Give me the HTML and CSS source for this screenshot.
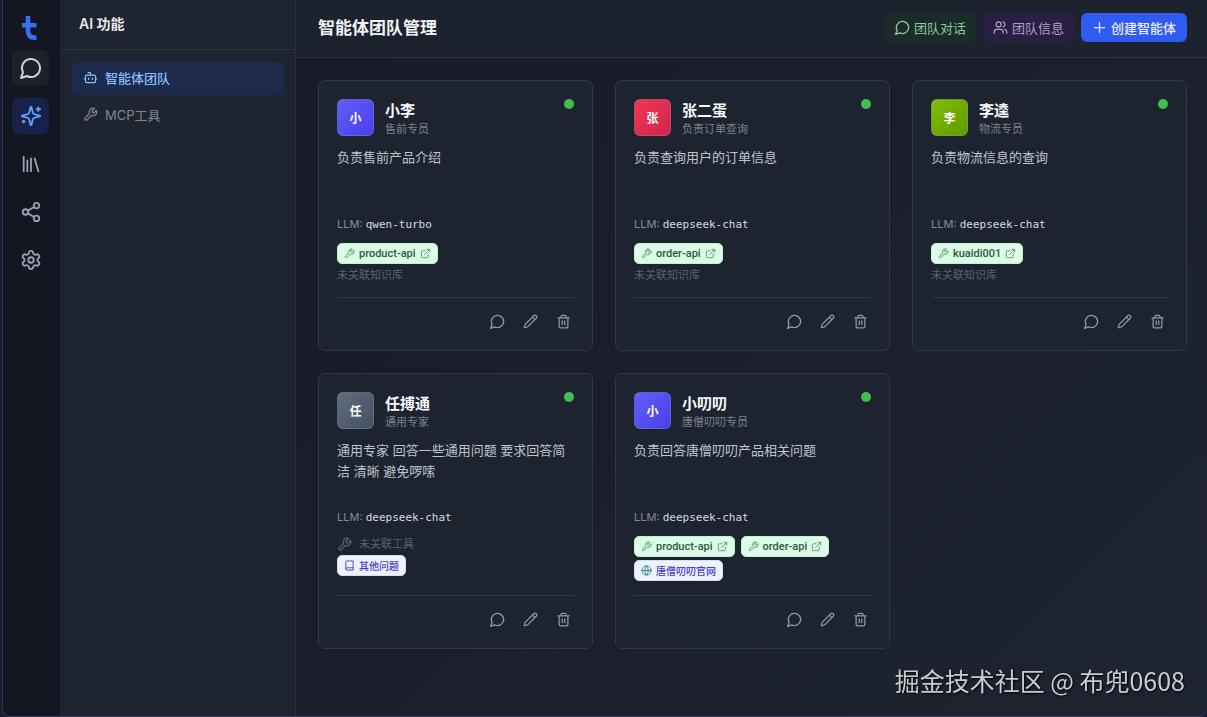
FILE: index.html
```html
<!DOCTYPE html>
<html lang="zh-CN">
<head>
    <meta charset="UTF-8">
    <meta name="viewport" content="width=device-width, initial-scale=1.0">
    <title>智能体团队管理</title>
    <link rel="stylesheet" href="styles.css">
</head>
<body>
    <!-- Shared icons -->
    <svg class="sprite" aria-hidden="true">
        <symbol id="chat" viewBox="1 1 22 22"><path d="M7.9 20A9 9 0 1 0 4 16.1L2 22Z"/></symbol>
        <symbol id="sparkles" viewBox="0 0 24 24"><path d="M9.94 15.5A2 2 0 0 0 8.5 14.06l-6.14-1.58a.5.5 0 0 1 0-.96L8.5 9.94A2 2 0 0 0 9.94 8.5l1.58-6.14a.5.5 0 0 1 .96 0l1.58 6.14a2 2 0 0 0 1.44 1.44l6.14 1.58a.5.5 0 0 1 0 .96l-6.14 1.58a2 2 0 0 0-1.44 1.44l-1.58 6.14a.5.5 0 0 1-.96 0z"/><path d="M20 2.5v4M22 4.5h-4M4 17v2M5 18H3"/></symbol>
        <symbol id="library" viewBox="0 0 24 24"><path d="m16 6 4 14M12 6v14M8 8v12M4 4v16"/></symbol>
        <symbol id="share" viewBox="0 0 24 24"><circle cx="18" cy="5" r="3"/><circle cx="6" cy="12" r="3"/><circle cx="18" cy="19" r="3"/><path d="m8.59 13.51 6.83 3.98M15.41 6.51l-6.82 3.98"/></symbol>
        <symbol id="gear" viewBox="0 0 24 24"><path d="M9.67 4.14a2.34 2.34 0 0 1 4.66 0 2.34 2.34 0 0 0 3.32 1.91 2.34 2.34 0 0 1 2.33 4.04 2.34 2.34 0 0 0 0 3.82 2.34 2.34 0 0 1-2.33 4.04 2.34 2.34 0 0 0-3.32 1.91 2.34 2.34 0 0 1-4.66 0 2.34 2.34 0 0 0-3.32-1.91 2.34 2.34 0 0 1-2.33-4.04 2.34 2.34 0 0 0 0-3.82 2.34 2.34 0 0 1 2.33-4.04 2.34 2.34 0 0 0 3.32-1.91"/><circle cx="12" cy="12" r="3"/></symbol>
        <symbol id="bot" viewBox="0 0 24 24"><path d="M12 8V4H8"/><rect width="16" height="12" x="4" y="8" rx="2"/><path d="M2 14h2M20 14h2M15 13v2M9 13v2"/></symbol>
        <symbol id="wrench" viewBox="0 0 24 24"><path d="M14.7 6.3a1 1 0 0 0 0 1.4l1.6 1.6a1 1 0 0 0 1.4 0l3.77-3.77a6 6 0 0 1-7.94 7.94l-6.91 6.91a2.12 2.12 0 0 1-3-3l6.91-6.91a6 6 0 0 1 7.94-7.94l-3.76 3.76z"/></symbol>
        <symbol id="users" viewBox="0 0 24 24"><path d="M16 21v-2a4 4 0 0 0-4-4H6a4 4 0 0 0-4 4v2M22 21v-2a4 4 0 0 0-3-3.87M16 3.13a4 4 0 0 1 0 7.75"/><circle cx="9" cy="7" r="4"/></symbol>
        <symbol id="plus" viewBox="0 0 24 24"><path d="M4 12h16M12 4v16"/></symbol>
        <symbol id="external" viewBox="0 0 24 24"><path d="M15 3h6v6M10 14 21 3M18 13v6a2 2 0 0 1-2 2H5a2 2 0 0 1-2-2V8a2 2 0 0 1 2-2h6"/></symbol>
        <symbol id="pencil" viewBox="0 0 24 24"><path d="M21.17 6.81a1 1 0 0 0-3.98-3.98L3.84 16.17a2 2 0 0 0-.5.83l-1.32 4.35a.5.5 0 0 0 .62.62l4.35-1.32a2 2 0 0 0 .83-.5zM15 5l4 4"/></symbol>
        <symbol id="trash" viewBox="0 0 24 24"><path d="M3 6h18M19 6v14a2 2 0 0 1-2 2H7a2 2 0 0 1-2-2V6M8 6V4a2 2 0 0 1 2-2h4a2 2 0 0 1 2 2v2M10 11v6M14 11v6"/></symbol>
        <symbol id="book" viewBox="0 0 24 24"><path d="M4 19.5v-15A2.5 2.5 0 0 1 6.5 2H20v20H6.5a2.5 2.5 0 0 1 0-5H20"/></symbol>
        <symbol id="globe" viewBox="0 0 24 24"><circle cx="12" cy="12" r="10"/><path d="M12 2a14.5 14.5 0 0 0 0 20 14.5 14.5 0 0 0 0-20M2 12h20"/></symbol>
    </svg>

    <div class="app">
        <nav class="rail" aria-label="主导航">
            <svg class="logo" viewBox="0 0 15 24" aria-hidden="true">
                <path d="M6 0v14.5q0 7.2 7 7.2h1.5M0 9.2h14.5"/>
            </svg>
            <a href="#" class="rail-link hovered" aria-label="对话"><svg class="icon"><use href="#chat"/></svg></a>
            <a href="#" class="rail-link active" aria-label="AI 功能"><svg class="icon"><use href="#sparkles"/></svg></a>
            <a href="#" class="rail-link" aria-label="知识库"><svg class="icon"><use href="#library"/></svg></a>
            <a href="#" class="rail-link" aria-label="分享"><svg class="icon"><use href="#share"/></svg></a>
            <a href="#" class="rail-link" aria-label="设置"><svg class="icon"><use href="#gear"/></svg></a>
        </nav>

        <aside class="sidebar">
            <h2 class="sidebar-title">AI 功能</h2>
            <nav class="menu">
                <a href="#" class="menu-item active"><svg class="icon"><use href="#bot"/></svg>智能体团队</a>
                <a href="#" class="menu-item"><svg class="icon"><use href="#wrench"/></svg>MCP工具</a>
            </nav>
        </aside>

        <main class="main">
            <header class="header">
                <h1 class="page-title">智能体团队管理</h1>
                <div class="header-actions">
                    <button class="btn btn-green"><svg class="icon"><use href="#chat"/></svg>团队对话</button>
                    <button class="btn btn-purple"><svg class="icon"><use href="#users"/></svg>团队信息</button>
                    <button class="btn btn-primary"><svg class="icon"><use href="#plus"/></svg>创建智能体</button>
                </div>
            </header>

            <div class="agents">
                <article class="card">
                    <div class="card-head">
                        <div class="avatar indigo">小</div>
                        <div class="who">
                            <h3 class="name">小李</h3>
                            <p class="role">售前专员</p>
                        </div>
                        <span class="status"></span>
                    </div>
                    <p class="desc">负责售前产品介绍</p>
                    <p class="llm">LLM: <code>qwen-turbo</code></p>
                    <div class="links">
                        <div class="tags">
                            <a href="#" class="tag tool"><svg class="icon"><use href="#wrench"/></svg>product-api<svg class="icon ext"><use href="#external"/></svg></a>
                        </div>
                        <p class="none">未关联知识库</p>
                    </div>
                    <div class="card-actions">
                        <button class="icon-btn" aria-label="对话"><svg class="icon"><use href="#chat"/></svg></button>
                        <button class="icon-btn" aria-label="编辑"><svg class="icon"><use href="#pencil"/></svg></button>
                        <button class="icon-btn" aria-label="删除"><svg class="icon"><use href="#trash"/></svg></button>
                    </div>
                </article>

                <article class="card">
                    <div class="card-head">
                        <div class="avatar rose">张</div>
                        <div class="who">
                            <h3 class="name">张二蛋</h3>
                            <p class="role">负责订单查询</p>
                        </div>
                        <span class="status"></span>
                    </div>
                    <p class="desc">负责查询用户的订单信息</p>
                    <p class="llm">LLM: <code>deepseek-chat</code></p>
                    <div class="links">
                        <div class="tags">
                            <a href="#" class="tag tool"><svg class="icon"><use href="#wrench"/></svg>order-api<svg class="icon ext"><use href="#external"/></svg></a>
                        </div>
                        <p class="none">未关联知识库</p>
                    </div>
                    <div class="card-actions">
                        <button class="icon-btn" aria-label="对话"><svg class="icon"><use href="#chat"/></svg></button>
                        <button class="icon-btn" aria-label="编辑"><svg class="icon"><use href="#pencil"/></svg></button>
                        <button class="icon-btn" aria-label="删除"><svg class="icon"><use href="#trash"/></svg></button>
                    </div>
                </article>

                <article class="card">
                    <div class="card-head">
                        <div class="avatar lime">李</div>
                        <div class="who">
                            <h3 class="name">李逵</h3>
                            <p class="role">物流专员</p>
                        </div>
                        <span class="status"></span>
                    </div>
                    <p class="desc">负责物流信息的查询</p>
                    <p class="llm">LLM: <code>deepseek-chat</code></p>
                    <div class="links">
                        <div class="tags">
                            <a href="#" class="tag tool"><svg class="icon"><use href="#wrench"/></svg>kuaidi001<svg class="icon ext"><use href="#external"/></svg></a>
                        </div>
                        <p class="none">未关联知识库</p>
                    </div>
                    <div class="card-actions">
                        <button class="icon-btn" aria-label="对话"><svg class="icon"><use href="#chat"/></svg></button>
                        <button class="icon-btn" aria-label="编辑"><svg class="icon"><use href="#pencil"/></svg></button>
                        <button class="icon-btn" aria-label="删除"><svg class="icon"><use href="#trash"/></svg></button>
                    </div>
                </article>

                <article class="card">
                    <div class="card-head">
                        <div class="avatar slate">任</div>
                        <div class="who">
                            <h3 class="name">任搏通</h3>
                            <p class="role">通用专家</p>
                        </div>
                        <span class="status"></span>
                    </div>
                    <p class="desc">通用专家 回答一些通用问题 要求回答简洁 清晰 避免啰嗦</p>
                    <p class="llm">LLM: <code>deepseek-chat</code></p>
                    <div class="links">
                        <p class="none"><svg class="icon"><use href="#wrench"/></svg>未关联工具</p>
                        <div class="tags">
                            <a href="#" class="tag kb"><svg class="icon"><use href="#book"/></svg>其他问题</a>
                        </div>
                    </div>
                    <div class="card-actions">
                        <button class="icon-btn" aria-label="对话"><svg class="icon"><use href="#chat"/></svg></button>
                        <button class="icon-btn" aria-label="编辑"><svg class="icon"><use href="#pencil"/></svg></button>
                        <button class="icon-btn" aria-label="删除"><svg class="icon"><use href="#trash"/></svg></button>
                    </div>
                </article>

                <article class="card">
                    <div class="card-head">
                        <div class="avatar indigo">小</div>
                        <div class="who">
                            <h3 class="name">小叨叨</h3>
                            <p class="role">唐僧叨叨专员</p>
                        </div>
                        <span class="status"></span>
                    </div>
                    <p class="desc">负责回答唐僧叨叨产品相关问题</p>
                    <p class="llm">LLM: <code>deepseek-chat</code></p>
                    <div class="links">
                        <div class="tags">
                            <a href="#" class="tag tool"><svg class="icon"><use href="#wrench"/></svg>product-api<svg class="icon ext"><use href="#external"/></svg></a>
                            <a href="#" class="tag tool"><svg class="icon"><use href="#wrench"/></svg>order-api<svg class="icon ext"><use href="#external"/></svg></a>
                        </div>
                        <div class="tags">
                            <a href="#" class="tag kb"><svg class="icon web"><use href="#globe"/></svg>唐僧叨叨官网</a>
                        </div>
                    </div>
                    <div class="card-actions">
                        <button class="icon-btn" aria-label="对话"><svg class="icon"><use href="#chat"/></svg></button>
                        <button class="icon-btn" aria-label="编辑"><svg class="icon"><use href="#pencil"/></svg></button>
                        <button class="icon-btn" aria-label="删除"><svg class="icon"><use href="#trash"/></svg></button>
                    </div>
                </article>
            </div>
        </main>
    </div>

    <div class="watermark">掘金技术社区 @ 布兜0608</div>
</body>
</html>
```
FILE: styles.css
```css
* {
    box-sizing: border-box;
    margin: 0;
    padding: 0;
}

body {
    min-height: 100vh;
    padding-left: 2px;
    background-color: #1b1b38;
    font-family: Inter, "Noto Sans CJK SC", sans-serif;
    font-size: 13px;
    color: #d1d5db;
}

a {
    color: inherit;
    text-decoration: none;
}

button {
    border: 0;
    background: none;
    font: inherit;
    color: inherit;
    cursor: pointer;
}

.sprite {
    display: none;
}

.icon {
    width: 15px;
    height: 15px;
    flex-shrink: 0;
    fill: none;
    stroke: currentColor;
    stroke-width: 2;
    stroke-linecap: round;
    stroke-linejoin: round;
}

.app {
    display: flex;
    min-height: 100vh;
    border-left: 1px solid #363b4e;
    border-bottom: 1px solid #3b3d58;
    border-radius: 0 0 8px 8px;
    overflow: hidden;
    background-color: #1d2430;
}

/* Icon rail */
.rail {
    display: flex;
    flex-direction: column;
    align-items: center;
    gap: 12px;
    width: 57px;
    flex-shrink: 0;
    padding: 16px 2px 0 0;
    background-color: #121722;
}

.logo {
    width: 15px;
    height: 24px;
    margin-bottom: -2px;
    margin-right: 3px;
    fill: none;
    stroke: #3b6fee;
    stroke-width: 4.6;
}

.rail-link {
    display: flex;
    align-items: center;
    justify-content: center;
    width: 37px;
    height: 36px;
    border-radius: 7px;
    color: #9a9fab;
}

.rail-link .icon {
    width: 22px;
    height: 22px;
}

.rail-link.hovered {
    background-color: #1c212c;
    color: #d1d5db;
}

.rail-link.active {
    background-color: #18214a;
    color: #60a0fa;
}

/* Sidebar */
.sidebar {
    width: 236px;
    flex-shrink: 0;
    background-color: #1e2530;
    border-right: 1px solid #2a313e;
}

.sidebar-title {
    height: 50px;
    padding-left: 19px;
    border-bottom: 1px solid #2d3440;
    font-size: 14px;
    font-weight: 600;
    line-height: 47px;
    color: #e5e7eb;
}

.menu {
    display: flex;
    flex-direction: column;
    gap: 4px;
    padding: 12px 11px 12px 12px;
}

.menu-item {
    display: flex;
    align-items: center;
    gap: 7px;
    height: 33px;
    padding: 0 11px 2px;
    border-radius: 6px;
    color: #80858f;
}

.menu-item.active {
    background-color: #1d2a4c;
    font-weight: 500;
    color: #8abcf8;
}

/* Main area */
.main {
    flex: 1;
    min-width: 0;
    background: linear-gradient(135deg, #161b27, #1f2530);
}

.header {
    display: flex;
    align-items: center;
    justify-content: space-between;
    height: 58px;
    padding: 0 20px 2px 22px;
    border-bottom: 1px solid #2d3341;
    background-color: #1d232e;
}

.page-title {
    font-size: 17px;
    font-weight: 600;
    line-height: 24px;
    color: #f3f4f6;
}

.header-actions {
    display: flex;
    gap: 7px;
}

.btn {
    display: flex;
    align-items: center;
    gap: 4px;
    height: 29px;
    padding: 0 10px;
    border-radius: 6px;
}

.btn-green {
    background-color: #1b2b2a;
    color: #85cb9b;
}

.btn-purple {
    background-color: #281f42;
    color: #b29bd0;
}

.btn-primary {
    padding: 0 11px;
    background-color: #2f5bf0;
    font-weight: 500;
    color: #e8efff;
}

.agents {
    display: grid;
    grid-template-columns: repeat(3, 1fr);
    gap: 22px;
    padding: 22px 20px 22px 22px;
}

.card {
    display: flex;
    flex-direction: column;
    padding: 18px;
    border: 1px solid #313744;
    border-radius: 7px;
    background-color: #1d2430;
}

.card-head {
    display: flex;
    gap: 11px;
    margin-bottom: 10px;
}

.avatar {
    display: flex;
    align-items: center;
    justify-content: center;
    width: 37px;
    height: 37px;
    border: 1px solid rgba(120, 130, 150, 0.4);
    border-radius: 6px;
    font-size: 12px;
    font-weight: 700;
    color: #fff;
}

.indigo {
    background: linear-gradient(135deg, #5f5ff8, #4b3eea);
}

.rose {
    background: linear-gradient(135deg, #ee3755, #d4244a);
}

.lime {
    background: linear-gradient(135deg, #80bf05, #609806);
}

.slate {
    background: linear-gradient(135deg, #616c7e, #455062);
}

.who {
    flex: 1;
}

.name {
    padding-top: 2px;
    font-size: 15px;
    font-weight: 600;
    line-height: 20px;
    color: #f9fafb;
}

.role {
    font-size: 11px;
    line-height: 16px;
    color: #7c818c;
}

.status {
    width: 10px;
    height: 10px;
    border-radius: 50%;
    background-color: #45bb50;
}

.desc {
    min-height: 63px;
    line-height: 21px;
    color: #bfc4cc;
}

.llm {
    margin: 6px 0 10px;
    font-size: 11px;
    line-height: 16px;
    color: #858a95;
}

.llm code {
    font-family: "DejaVu Sans Mono", monospace;
    color: #d8dbe0;
}

.links {
    display: flex;
    flex-direction: column;
    gap: 3px;
    margin-bottom: 14px;
}

.tags {
    display: flex;
    flex-wrap: wrap;
    gap: 6px;
}

.tag {
    display: flex;
    align-items: center;
    gap: 4px;
    height: 21px;
    padding: 0 6px;
    border: 1px solid;
    border-radius: 5px;
    font-size: 10px;
    font-weight: 500;
}

.tag .icon {
    width: 11px;
    height: 11px;
}

.tool {
    border-color: #bff3cf;
    background-color: #dcfce7;
    font-family: Roboto, sans-serif;
    font-size: 11px;
    color: #2c5a40;
}

.tool .icon {
    color: #3c9a5b;
}

.tool .ext {
    color: #5d9272;
}

.kb {
    border-color: #d3dafa;
    background-color: #eef2ff;
    color: #4a3cc4;
}

.kb .web {
    color: #2b8583;
}

.none {
    display: flex;
    align-items: center;
    gap: 7px;
    font-size: 11px;
    line-height: 16px;
    color: #596070;
}

.card-actions {
    display: flex;
    justify-content: flex-end;
    gap: 11px;
    margin-top: auto;
    padding-top: 12px;
    border-top: 1px solid #303743;
}

.icon-btn {
    display: flex;
    align-items: center;
    justify-content: center;
    width: 22px;
    height: 22px;
    color: #9298a3;
}

.watermark {
    position: fixed;
    right: 22px;
    bottom: 19px;
    font-family: "Noto Sans CJK SC", sans-serif;
    font-size: 25px;
    line-height: 36px;
    color: #c9cbd0;
    text-shadow: 1px 1px 2px #000;
}
```
